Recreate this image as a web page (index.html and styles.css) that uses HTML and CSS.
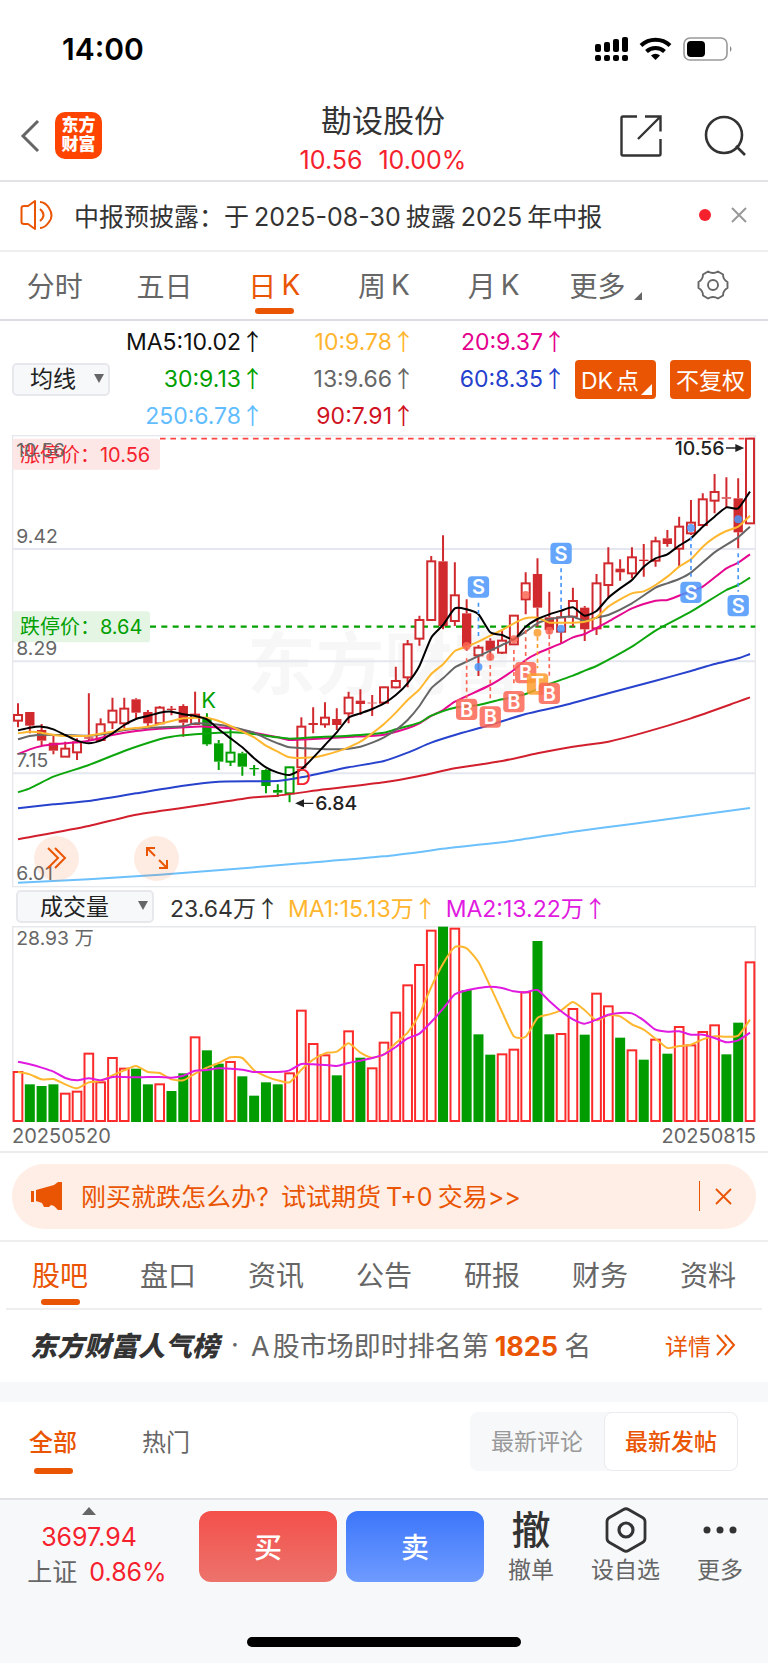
FILE: index.html
```html
<!DOCTYPE html>
<html lang="zh-CN">
<head>
<meta charset="utf-8">
<meta name="viewport" content="width=device-width, initial-scale=1">
<title>勘设股份 10.56 10.00%</title>
<link rel="stylesheet" href="styles.css">
</head>
<body>
<div class="status">
  <span class="clock">14:00</span>
  <svg class="status-icons" viewBox="0 0 138 26" aria-hidden="true">
    <g fill="#000">
      <rect x="0" y="8" width="6" height="8" rx="2"/><rect x="9" y="6" width="6" height="10" rx="2"/><rect x="18" y="3" width="6" height="13" rx="2"/><rect x="27" y="1" width="6" height="15" rx="2"/>
      <rect x="0" y="19" width="6" height="6" rx="2"/><rect x="9" y="19" width="6" height="6" rx="2"/><rect x="18" y="19" width="6" height="6" rx="2"/><rect x="27" y="19" width="6" height="6" rx="2"/>
      <path d="M60.500 24l-4.500-4.500a6.500 6.500 0 0 1 9 0z"/>
    </g>
    <g fill="none" stroke="#000" stroke-width="4"><path d="M46 9.500a21 21 0 0 1 29 0"/><path d="M51.500 15.500a13 13 0 0 1 18 0"/></g>
    <rect x="89" y="2" width="43" height="22" rx="6" fill="none" stroke="#999" stroke-width="1.600"/>
    <rect x="92" y="5" width="18" height="16" rx="4"/><path d="M135 10q3 3 0 6z" fill="#888"/>
  </svg>
</div>

<header class="header">
  <div class="header-left">
    <button class="icon-button" aria-label="返回"><svg width="20" height="34" viewBox="0 0 20 34"><path d="M18 2L3 17l15 15" fill="none" stroke="#666" stroke-width="3"/></svg></button>
    <div class="brand">东方<br>财富</div>
  </div>
  <div class="header-title">
    <h1>勘设股份</h1>
    <p>10.56<span>10.00%</span></p>
  </div>
  <div class="header-right">
    <button class="icon-button" aria-label="分享"><svg width="42" height="42" viewBox="0 0 42 42"><g fill="none" stroke="#333" stroke-width="2.400"><path d="M17 1.500H3Q1.500 1.500 1.500 3v36q0 1.500 1.500 1.500h36q1.500 0 1.500-1.500V24M25 1.500h15.500v15M40 2L18 24"/></g></svg></button>
    <button class="icon-button" aria-label="搜索"><svg width="42" height="42" viewBox="0 0 42 42"><g fill="none" stroke="#333" stroke-width="2.600"><circle cx="20" cy="20" r="18"/><path d="M32 31l9 9"/></g></svg></button>
  </div>
</header>

<section class="notice">
  <svg width="33" height="30" viewBox="0 0 33 30" aria-hidden="true"><g fill="none" stroke="#ea5504" stroke-width="2" stroke-linejoin="round"><path d="M1.500 8Q1.500 6 4 6h4l7-5v28l-7-5H4q-2.500 0-2.500-2z"/><path d="M20 9q7 6 0 12M20 2q5 0 9 6 5 8 0 14-4 6-9 6"/></g></svg>
  <p>中报预披露：于<span class="latin">2025-08-30</span>披露<span class="latin">2025</span>年中报</p>
  <i class="red-dot"></i>
  <button class="icon-button" aria-label="关闭"><svg width="16" height="16" viewBox="0 0 16 16"><path d="M1 1l14 14M15 1L1 15" stroke="#999" stroke-width="2"/></svg></button>
</section>

<nav class="periods">
  <a href="#">分时</a><a href="#">五日</a><a href="#" class="active">日<span class="latin">K</span></a><a href="#">周<span class="latin">K</span></a><a href="#">月<span class="latin">K</span></a><a href="#" class="more">更多</a>
  <button class="icon-button" aria-label="设置"><svg width="32" height="30" viewBox="0 0 32 30"><g fill="none" stroke="#666" stroke-width="1.900" stroke-linejoin="round"><path d="M11 1.500q5 3 10 0l5 3q0 5 4.500 7.500v6Q26 20.500 26 25.500l-5 3q-5-3-10 0l-5-3q0-5-4.500-7.500v-6Q6 9.500 6 4.500z"/><circle cx="16" cy="15" r="5"/></g></svg></button>
</nav>

<section class="averages">
  <span class="picker"><select aria-label="主图指标"><option>均线</option></select></span>
  <div class="ma-grid">
    <div class="c-black">MA5:10.02<span class="arrow">↑</span></div><div class="c-amber">10:9.78<span class="arrow">↑</span></div><div class="c-pink">20:9.37<span class="arrow">↑</span></div>
    <div class="c-green">30:9.13<span class="arrow">↑</span></div><div class="c-gray">13:9.66<span class="arrow">↑</span></div><div class="c-blue">60:8.35<span class="arrow">↑</span></div>
    <div class="c-sky">250:6.78<span class="arrow">↑</span></div><div class="c-red">90:7.91<span class="arrow">↑</span></div>
  </div>
  <button class="tag corner"><span class="latin">DK</span>点</button>
  <button class="tag">不复权</button>
</section>

<main class="chart-area">
  <div class="kline">
    <svg id="kline" viewBox="0 0 2232 1358" role="img" aria-label="日K线图"></svg>
    <div class="chart-tools">
      <button class="round" aria-label="展开"><svg width="20" height="22" viewBox="0 0 20 22"><path d="M1 1l10 10L1 21M8 1l10 10L8 21" fill="none" stroke="#ea5504" stroke-width="2"/></svg></button>
      <button class="round" aria-label="全屏"><svg width="24" height="24" viewBox="0 0 24 24"><path d="M10 2H2v8M2 2l8 8M14 22h8v-8M22 22l-8-8" fill="none" stroke="#ea5504" stroke-width="2"/></svg></button>
    </div>
  </div>
  <div class="volume-head">
    <span class="picker wide"><select aria-label="副图指标"><option>成交量</option></select></span>
    <span>23.64万<span class="arrow">↑</span></span><span class="c-amber">MA1:15.13万<span class="arrow">↑</span></span><span class="c-purple">MA2:13.22万<span class="arrow">↑</span></span>
  </div>
  <svg id="volume" viewBox="0 0 2232 588" role="img" aria-label="成交量"></svg>
  <div class="dates"><span>20250520</span><span>20250815</span></div>
</main>

<section class="promo-wrap">
  <div class="promo">
    <svg width="31" height="28" viewBox="0 0 31 28" aria-hidden="true"><path d="M0 9h3v11H0zM5 8l18-5 4-3h4v28h-4l-4-4-3-1-2 2h-5l-2-4-6-2z" fill="#ea5504"/></svg>
    <a href="#">刚买就跌怎么办？试试期货<span class="latin">T+0</span>交易&gt;&gt;</a>
    <button class="icon-button" aria-label="关闭广告"><svg width="17" height="17" viewBox="0 0 17 17"><path d="M1 1l15 15M16 1L1 16" stroke="#ea5504" stroke-width="1.800"/></svg></button>
  </div>
</section>

<nav class="sections">
  <a href="#" class="active">股吧</a><a href="#">盘口</a><a href="#">资讯</a><a href="#">公告</a><a href="#">研报</a><a href="#">财务</a><a href="#">资料</a>
</nav>

<section class="rank">
  <strong>东方财富人气榜</strong><i>·</i>
  <p>A<span class="latin">股</span>市场即时排名第<b>1825</b>名</p>
  <a href="#">详情<svg width="20" height="22" viewBox="0 0 20 22" aria-hidden="true"><path d="M1 1l9 10-9 10M9 1l9 10-9 10" fill="none" stroke="#ea5504" stroke-width="2"/></svg></a>
</section>

<section class="posts">
  <nav><a href="#" class="active">全部</a><a href="#">热门</a></nav>
  <div class="segment"><button>最新评论</button><button class="on">最新发帖</button></div>
</section>

<footer class="footer">
  <div class="bar">
    <a href="#" class="index"><i></i><span class="up level">3697.94</span><span>上证<b class="up">0.86%</b></span></a>
    <button class="trade buy">买</button>
    <button class="trade sell">卖</button>
    <a href="#" class="action"><span class="glyph">撤</span>撤单</a>
    <a href="#" class="action wide-action"><svg width="42" height="46" viewBox="0 0 42 46" aria-hidden="true"><g fill="none" stroke="#333"><path d="M18.500 2.500q2.500-1.500 5 0l14 8q2.500 1.500 2.500 4v17q0 2.500-2.500 4l-14 8q-2.500 1.500-5 0l-14-8q-2.500-1.500-2.500-4v-17q0-2.500 2.500-4z" stroke-width="2.800"/><circle cx="21" cy="23" r="7" stroke-width="3.200"/></g></svg>设自选</a>
    <a href="#" class="action"><svg width="42" height="46" viewBox="0 0 42 46" aria-hidden="true"><g fill="#333"><circle cx="8" cy="23" r="3.500"/><circle cx="21" cy="23" r="3.500"/><circle cx="34" cy="23" r="3.500"/></g></svg>更多</a>
  </div>
  <div class="home"></div>
</footer>
<script src="chart.js"></script>
</body>
</html>
```
FILE: styles.css
```css
* { box-sizing: border-box; }
body {
  margin: 0;
  background: #fff;
  color: #333;
  font-family: Inter, "Noto Sans CJK SC", sans-serif;
  font-size: 24px;
}
a { color: inherit; text-decoration: none; }
button { font: inherit; color: inherit; border: 0; padding: 0; background: none; }
svg { display: block; }
h1, p { margin: 0; }
.icon-button { display: flex; }
.latin { margin: 0 5px; }
.arrow { font-family: "Noto Sans CJK SC", sans-serif; line-height: 1; }

.c-black { color: #111; }
.c-amber { color: #ffb52e; }
.c-pink { color: #e4008c; }
.c-green { color: #00a000; }
.c-gray { color: #666; }
.c-blue { color: #2440cc; }
.c-sky { color: #62bdff; }
.c-red { color: #d0121f; }
.c-purple { color: #e01ae0; }

.status { display: flex; justify-content: space-between; align-items: center; height: 97px; padding: 0 35px 0 62px; }
.clock { color: #000; font-size: 30px; font-weight: 600; }
.status-icons { width: 138px; height: 26px; }

.header { display: grid; grid-template-columns: 1fr auto 1fr; align-items: center; height: 85px; padding: 4px 22px 1px 20px; border-bottom: 2px solid #e2e3e7; }
.header-left { display: flex; align-items: center; gap: 15px; padding-bottom: 9px; }
.brand { width: 47px; height: 47px; border-radius: 10px; background: #ff4400; color: #fff; font-size: 17px; font-weight: 900; line-height: 19px; text-align: center; padding-top: 4px; }
.header-title { text-align: center; }
.header-title h1 { font-size: 31px; font-weight: 400; line-height: 40px; }
.header-title p { color: #f5222d; font-size: 25px; line-height: 38px; }
.header-title span { margin-left: 16px; }
.header-right { display: flex; justify-content: flex-end; gap: 42px; padding-bottom: 9px; }

.notice { display: flex; align-items: center; height: 70px; padding: 0 21px 2px 20px; border-bottom: 2px solid #eee; }
.notice p { flex: 1; margin-left: 21px; font-size: 25px; white-space: nowrap; }
.red-dot { width: 12px; height: 12px; border-radius: 50%; background: #f5222d; margin-right: 20px; }

.periods { display: grid; grid-template-columns: repeat(7, 1fr); height: 69px; border-bottom: 2px solid #dcdde2; color: #666; font-size: 28px; }
.periods a, .periods button { display: flex; align-items: center; justify-content: center; padding-bottom: 2px; }
.periods .latin { margin-right: 0; }
.periods .active, .sections .active, .posts .active { position: relative; color: #ea5504; }
.periods .active::after, .sections .active::after, .posts .active::after { content: ""; position: absolute; left: 50%; bottom: 5px; width: 39px; height: 6px; margin-left: -19px; border-radius: 3px; background: #ea5504; }
.sections .active::after { bottom: 3px; }
.periods .more { padding-left: 5px; }
.periods .more::after { content: ""; align-self: flex-end; margin: 0 0 17px 9px; border-left: 8px solid transparent; border-bottom: 8px solid #666; }

.averages { display: flex; align-items: center; height: 114px; padding: 2px 17px 0 12px; }
.picker { position: relative; width: 98px; }
.picker select { display: block; appearance: none; width: 100%; height: 33px; padding: 0 0 0 16px; border: 2px solid #e6e8ec; border-radius: 5px; background: #f7f8fa; color: #222; font: 23px/28px Inter, "Noto Sans CJK SC", sans-serif; }
.picker::after { content: ""; position: absolute; right: 6px; top: 11px; border: 5px solid transparent; border-bottom: 0; border-top: 9px solid #666; pointer-events: none; }
.ma-grid { display: grid; grid-template-columns: 154px 151px 151px; grid-auto-rows: 37px; margin-right: auto; font-size: 23px; line-height: 37px; text-align: right; white-space: nowrap; }
.tag { position: relative; width: 81px; height: 39px; margin-left: 14px; border-radius: 4px; background: #ea5504; color: #fff; font-size: 23px; white-space: nowrap; }
.ma-grid + .tag { margin-left: 0; }
.corner { padding-right: 16px; }
.corner .latin { margin-right: 3px; }
.corner::after { content: ""; position: absolute; right: 4px; bottom: 4px; border-left: 11px solid transparent; border-bottom: 11px solid #fff; }

.chart-area { padding: 0 12px; border-bottom: 2px solid #ececee; }
.kline { position: relative; }
.kline > svg, #volume { width: 100%; height: auto; }
.chart-tools { position: absolute; left: 22px; bottom: 7px; display: flex; gap: 55px; }
.round { display: grid; place-items: center; width: 45px; height: 45px; border-radius: 50%; background: rgba(250, 110, 40, .13); }
.volume-head { display: flex; align-items: center; height: 38px; padding-left: 4px; gap: 9px; font-size: 23px; white-space: nowrap; }
.wide { width: 138px; margin-right: 7px; }
.wide select { padding-left: 22px; }
.dates { display: flex; justify-content: space-between; color: #666; font-size: 20px; line-height: 29px; }
#kline text, #volume text { font-size: 58px; fill: #666; }
#kline .watermark { font-size: 205px; font-weight: 700; fill: #f7f7f7; }
#kline .mark { font-size: 60px; font-weight: 600; fill: #fff; text-anchor: middle; }
#kline .extreme { font-weight: 500; fill: #222; }
#kline .t-red { font-size: 60px; fill: #f5222d; }
#kline .t-green { font-size: 60px; fill: #00a000; }
#kline .signal { font-size: 66px; }

.promo-wrap { padding: 11px 12px; border-bottom: 2px solid #eee; }
.promo { display: flex; align-items: center; height: 65px; padding: 0 24px 0 19px; border-radius: 32px; background: #feeee5; color: #ea5504; font-size: 25px; }
.promo a { flex: 1; margin-left: 19px; padding-bottom: 2px; white-space: nowrap; }
.promo button { height: 30px; align-items: center; padding-left: 15px; border-left: 1px solid #ea5504; }

.sections { display: grid; grid-template-columns: repeat(7, 1fr); height: 68px; margin: 0 6px; border-bottom: 2px solid #eee; color: #666; font-size: 28px; }
.sections a { display: flex; align-items: center; justify-content: center; padding-bottom: 2px; }

.rank { display: flex; align-items: center; height: 72px; padding: 0 32px 2px 30px; color: #666; font-size: 27px; white-space: nowrap; }
.rank strong { color: #333; font-size: 27px; font-weight: 900; font-style: italic; }
.rank i { width: 32px; text-align: center; font-style: normal; }
.rank p { flex: 1; }
.rank .latin { margin: 0 0 0 3px; }
.rank b { margin: 0 6px; color: #ea5504; font-weight: 700; }
.rank a { display: flex; align-items: center; gap: 5px; color: #ea5504; font-size: 23px; }

.posts { display: flex; justify-content: space-between; height: 116px; padding: 0 30px 0 29px; border-top: 20px solid #f7f8fa; }
.posts nav { display: flex; gap: 65px; height: 77px; font-size: 24px; color: #666; }
.posts nav a { display: flex; align-items: center; }
.posts .active { font-weight: 500; }
.segment { display: flex; height: 59px; margin-top: 10px; border-radius: 8px; background: #f7f8fa; color: #999; font-size: 23px; }
.segment button { width: 134px; border-radius: 8px; padding-bottom: 2px; }
.segment .on { border: 1px solid #eaebee; background: #fff; color: #ea5504; font-weight: 500; }

.footer { border-top: 2px solid #e0e2e5; background: #f7f8fa; padding: 7px 10px 17px 28px; }
.bar { display: flex; align-items: flex-start; height: 130px; }
.index { display: flex; flex-direction: column; align-items: center; width: 138px; margin-right: 33px; color: #666; font-size: 25px; line-height: 35px; white-space: nowrap; }
.index i { border: 7px solid transparent; border-top: 0; border-bottom: 8px solid #666; margin: 0 16px 5px 0; }
.index .level { margin-right: 16px; }
.index .up { color: #f5222d; font-weight: 400; }
.index b { margin-left: 12px; }
.trade { width: 138px; height: 71px; margin: 4px 9px 0 0; border-radius: 12px; color: #fff; font-size: 28px; font-weight: 500; }
.buy { background: linear-gradient(#f4504b, #ec736c); }
.sell { background: linear-gradient(#3c76fa, #6f9bff); }
.action { display: flex; flex-direction: column; align-items: center; width: 76px; color: #666; font-size: 23px; line-height: 34px; white-space: nowrap; }
.action svg, .glyph { height: 46px; }
.glyph { color: #333; font-size: 39px; line-height: 46px; font-weight: 500; }
.wide-action { flex: 1; }
.home { width: 274px; height: 10px; margin: 0 auto; border-radius: 5px; background: #000; transform: translateX(-9px); }
```
FILE: chart.js
```js
const NS = 'http://www.w3.org/2000/svg';
const RED = '#d02a2e', GREEN = '#00a000';
const xAt = i => 18 + i * 35.42;

function add(parent, tag, attrs, text) {
  const el = document.createElementNS(NS, tag);
  for (const k in attrs) el.setAttribute(k, attrs[k]);
  if (text) el.textContent = text;
  parent.appendChild(el);
  return el;
}

// Draws a smooth line through a flat list of [index, y, index, y, ...].
function curve(svg, flat, color, dy, width) {
  const p = [];
  for (let i = 0; i < flat.length; i += 2) p.push([xAt(flat[i]), flat[i + 1] + dy]);
  let d = `M${p[0]}`;
  for (let i = 0; i < p.length - 1; i++) {
    const a = p[i - 1] || p[i], b = p[i], c = p[i + 1], e = p[i + 2] || c;
    const s = (c[0] - b[0]) / 5;
    const m1 = a === b ? (c[1] - b[1]) / (c[0] - b[0]) : (c[1] - a[1]) / (c[0] - a[0]);
    const m2 = e === c ? (c[1] - b[1]) / (c[0] - b[0]) : (e[1] - b[1]) / (e[0] - b[0]);
    d += `C${b[0] + s},${b[1] + m1 * s} ${c[0] - s},${c[1] - m2 * s} ${c}`;
  }
  add(svg, 'path', { d, fill: 'none', stroke: color, 'stroke-width': width, 'stroke-linejoin': 'round' });
}

// Turns one value per day into the flat list that curve() takes.
const seq = (start, ys) => ys.flatMap((y, i) => [start + i, y]);

// kind, high, body top, body bottom, low
// h: hollow red, r: solid red, g: solid green, G: hollow green
const candles = [
  ['h',805,840,857,877],['r',831,831,872,895],['r',867,885,917,930],['r',900,923,947,958],['h',920,941,965,965],['h',910,922,952,975],['r',775,907,911,915],['h',850,868,915,915],
  ['h',788,827,862,882],['h',788,821,865,880],['r',790,793,833,853],['r',825,831,865,875],['h',813,818,865,867],['r',813,821,825,841],['r',808,813,863,905],['h',770,839,867,867],
  ['g',835,852,928,932],['g',915,925,980,1005],['G',880,953,980,993],['g',950,955,995,1022],['g',990,999,1003,1022],['g',1003,1005,1053,1075],['g',1048,1065,1073,1085],['G',995,997,1075,1102],
  ['h',847,875,997,997],['r',817,864,870,895],['h',802,848,868,878],['r',820,852,870,885],['h',770,788,835,865],['r',763,797,807,840],['r',780,803,805,843],['h',755,757,803,805],
  ['h',695,738,757,760],['h',615,628,727,757],['h',542,555,611,632],['h',363,379,555,555],['r',301,379,573,583],['h',382,481,558,573],['r',493,535,635,647],['h',630,638,661,723],
  ['r',610,617,647,675],['h',585,617,653,657],['h',542,542,628,630],['h',412,445,493,538],['r',370,417,518,575],['r',470,547,585,597],['h',527,547,590,625],['h',458,498,545,575],
  ['r',513,518,583,618],['h',417,445,580,600],['h',337,385,450,490],['r',373,401,412,437],['h',337,367,415,430],['r',327,374,378,425],['h',305,319,377,395],['r',285,310,327,335],
  ['h',245,275,341,393],['h',195,263,295,300],['h',175,193,270,275],['h',117,171,197,235],['r',127,187,191,217],['r',130,190,292,340],['h',11,11,265,267]
];

const k = document.getElementById('kline');
add(k, 'text', { x: 706, y: 762, class: 'watermark' }, '东方财富');
for (const y of [342, 679, 1015]) add(k, 'path', { d: `M2 ${y}H2230`, stroke: '#e4e7ef', 'stroke-width': 6 });
add(k, 'rect', { x: 2, y: 2, width: 2228, height: 1353, fill: 'none', stroke: '#e6e8ec', 'stroke-width': 4 });

add(k, 'path', { d: 'M444 11H2230', stroke: '#f44', 'stroke-width': 5, 'stroke-dasharray': '17 14' });
add(k, 'path', { d: 'M414 575H2230', stroke: GREEN, 'stroke-width': 7, 'stroke-dasharray': '18 16' });

candles.forEach(([kind, hi, top, bot, lo], i) => {
  const x = xAt(i), up = kind === 'r' || kind === 'h', color = up ? RED : GREEN;
  const hollow = kind === 'h' || kind === 'G';
  add(k, 'path', { d: `M${x} ${hi}V${top}M${x} ${bot}V${lo}`, stroke: color, 'stroke-width': 6 });
  if (hollow) add(k, 'rect', { x: x - 12, y: top, width: 24, height: bot - top, fill: '#fff', stroke: color, 'stroke-width': 6 });
  else add(k, 'rect', { x: x - 14, y: top, width: 28, height: bot - top, fill: color });
});

curve(k, [0,1343,6,1333,12,1319,18,1303,24,1285,31,1264,37,1237,42,1217,47,1190,52,1167,57,1143,62,1119], '#6cc0fb', 0, 6);
curve(k, [0,1213,6,1173,10,1139,16,1108,20,1087,22,1082,26,1063,31,1042,34,1023,37,1000,41,978,44,955,47,935,50,920,53,893,57,850,61,800,62,787], '#d21f2d', 0, 6);
curve(k, [0,1120,3,1108,6,1098,10,1075,14,1052,17,1040,22,1038,24,1027,28,997,31,978,33,953,35,923,37,900,40,870,43,837,46,813,50,775,54,737,57,708,59,687,61,670,62,657], '#2742cc', 0, 6);
curve(k, [0,957,1,943,2,933,3,928,4,925,6,917,8,900,10,888,12,881,15,875,16,875,18,880,20,893,22,907,23,915,25,912,28,906,31,899,33,880,34,865,35,843,36,825,37,800,40,750,42,705,43,675,44,655,46,625,47,607,48,597,50,560,52,520,54,497,55,495,57,468,58,455,60,400,61,383,62,358], '#e6098f', 0, 6);
curve(k, [0,1072,1,1060,3,1025,6,990,9,948,12,913,13,905,15,898,17,893,19,893,22,907,23,911,25,907,28,902,31,893,32,883,34,863,35,842,37,818,39,810,41,793,43,777,45,747,47,722,48,707,49,693,52,635,54,587,57,530,60,465,61,450,62,428], '#0da60d', 0, 6);
curve(k, [0,913,1,903,2,899,4,900,6,902,8,893,9,885,11,878,14,874,15,865,17,869,18,875,20,893,21,910,22,925,23,937,25,941,27,943,28,941,29,935,30,923,31,907,32,885,33,855,34,813,35,760,36,730,37,697,38,680,39,663,40,647,41,630,42,613,43,590,44,565,45,553,46,547,47,545,48,558,49,548,50,540,52,505,54,458,55,445,56,432,57,413,59,352,61,307,62,275], '#666', 0, 6);
curve(k, [0,895,1,890,2,893,3,900,4,903,6,902,8,890,9,883,11,875,12,867,13,858,14,850,15,848,16,848,17,858,18,873,19,890,20,907,21,932,22,950,23,967,25,967,26,960,27,950,28,937,29,920,30,895,31,867,32,833,33,795,34,763,35,717,36,688,37,648,38,635,39,620,40,602,41,585,42,565,43,550,44,548,45,563,46,563,47,563,48,560,49,547,50,515,51,493,52,475,53,469,54,450,55,425,56,395,57,373,58,335,59,307,60,288,61,275,62,242], '#ffb72f', 0, 6);
curve(k, seq(0, [886,878,875,883,900,917,925,917,895,870,852,843,833,830,838,843,853,883,910,937,970,997,1013,1020,1003,968,930,892,848,835,822,805,780,745,693,608,570,520,523,538,592,600,613,575,552,538,527,517,542,528,488,460,435,395,370,358,332,310,275,245,217,220,170]), '#000', 0, 6);

// Trade markers: label, day, dot y, dashed line from/to, badge centre y
[
  ['S', 39, 696, 503, 610, 456], ['S', 46, 581, 400, 530, 355], ['S', 57, 279, 305, 425, 472], ['S', 61, 253, 355, 470, 512],
  ['B', 38, 633, 670, 790, 823], ['B', 40, 666, 690, 800, 846], ['B', 42, 613, 645, 755, 800], ['B', 43, 480, 585, 680, 713],
  ['T', 44, 593, 605, 700, 747], ['B', 45, 587, 600, 730, 775]
].forEach(([t, i, dot, y1, y2, cy]) => {
  const x = xAt(i), color = { S: '#4a97fb', B: '#fb6655', T: '#fb9d2e' }[t];
  add(k, 'path', { d: `M${x} ${y1}V${y2}`, stroke: color, 'stroke-width': 5, 'stroke-dasharray': '12 10' });
  add(k, 'circle', { cx: x, cy: dot, r: 12, fill: color, opacity: .85 });
  add(k, 'rect', { x: x - 32, y: cy - 32, width: 64, height: 64, rx: 12, fill: color, opacity: .85 });
  add(k, 'text', { x, y: cy + 22, class: 'mark' }, t);
});

add(k, 'text', { x: 568, y: 820, class: 't-green signal' }, 'K');
add(k, 'text', { x: 850, y: 1049, class: 't-red signal' }, 'D');
add(k, 'rect', { x: 2, y: 11, width: 442, height: 93, rx: 8, fill: '#fde6e6' });
add(k, 'text', { x: 24, y: 80, class: 't-red' }, '涨停价：10.56');
add(k, 'rect', { x: 2, y: 529, width: 412, height: 93, rx: 8, fill: '#e4f5e4' });
add(k, 'text', { x: 24, y: 597, class: 't-green' }, '跌停价：8.64');
[['10.56', 65], ['9.42', 323], ['8.29', 660], ['7.15', 995], ['6.01', 1335]].forEach(([t, y]) => add(k, 'text', { x: 13, y }, t));
add(k, 'path', { d: 'M860 1105H904M854 1105l20-9v18z', stroke: '#222', 'stroke-width': 4, fill: '#222' });
add(k, 'text', { x: 910, y: 1126, class: 'extreme' }, '6.84');
add(k, 'path', { d: 'M2142 39H2186M2192 39l-20-9v18z', stroke: '#222', 'stroke-width': 4, fill: '#222' });
add(k, 'text', { x: 1988, y: 60, class: 'extreme' }, '10.56');

// Volume bars: top edge of each day's bar, negative for falling days
const bars = [438,-475,-480,-475,503,497,383,469,396,428,-428,-475,475,-495,-442,334,-373,-413,408,-451,-509,-469,-475,442,254,354,388,-448,316,-395,427,350,260,178,117,14,-2,8,-192,-325,-386,385,371,199,-45,-325,324,249,-326,203,241,-335,373,-401,341,-383,303,358,318,298,-385,-290,109];
const v = document.getElementById('volume');
add(v, 'path', { d: 'M2 588V2H2230V588', fill: 'none', stroke: '#e6e8ec', 'stroke-width': 5 });
bars.forEach((b, i) => {
  const x = xAt(i), top = Math.abs(b);
  if (b < 0) add(v, 'rect', { x: x - 15, y: top, width: 30, height: 588 - top, fill: '#009c00' });
  else add(v, 'rect', { x: x - 13, y: top, width: 26, height: 585 - top, fill: '#fff', stroke: '#fb2b2b', 'stroke-width': 6 });
});
curve(v, seq(0, [545,552,567,566,582,594,576,572,555,540,527,545,548,567,570,550,532,518,501,503,540,558,570,576,538,508,489,484,459,487,502,492,458,427,372,290,220,170,174,215,288,365,438,439,383,372,360,335,360,390,375,378,402,418,445,473,467,463,447,438,439,436,388]), '#ffb72f', -107, 6);
curve(v, seq(0, [514,522,532,544,563,570,564,570,560,560,561,560,560,562,556,541,539,534,535,538,545,545,545,540,521,522,524,527,518,511,503,492,470,444,430,395,355,312,300,293,289,293,303,306,299,332,363,387,400,388,373,368,369,390,418,424,423,433,433,443,456,450,427]), '#e01ae0', -107, 6);
add(v, 'text', { x: 13, y: 58 }, '28.93 万');
```
